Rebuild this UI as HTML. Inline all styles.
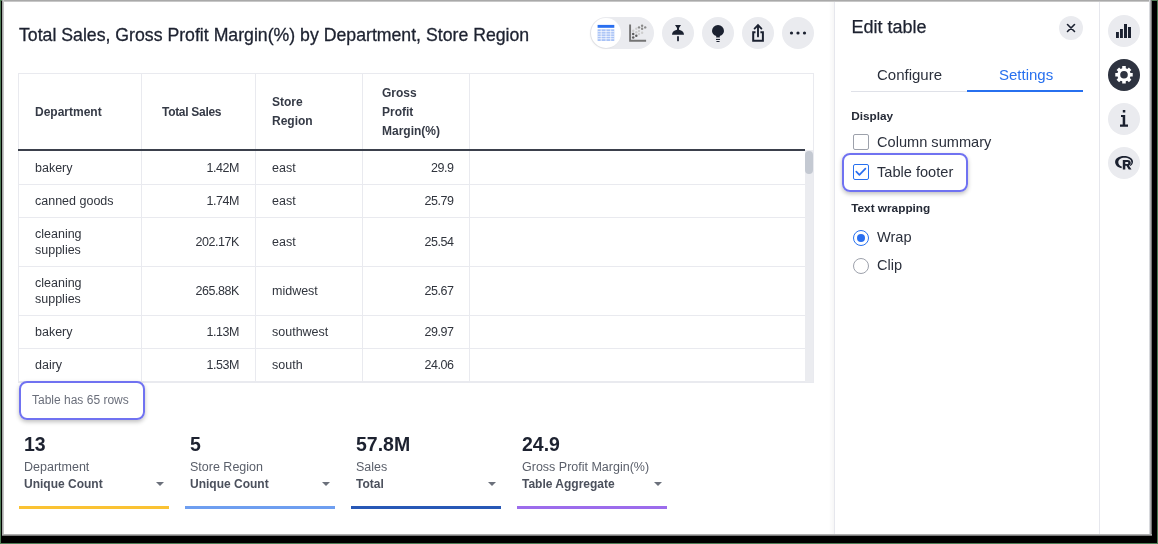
<!DOCTYPE html>
<html><head><meta charset="utf-8">
<style>
*{box-sizing:border-box;margin:0;padding:0}
html,body{width:1158px;height:544px;overflow:hidden;background:#4f7d56;font-family:"Liberation Sans",sans-serif}
.abs{position:absolute}
#shadow{position:absolute;left:1px;top:1px;width:1156px;height:542px;background:#000}
#win{position:absolute;left:2px;top:0;width:1150px;height:536px;background:#fff;overflow:hidden}
#win .edge-t{position:absolute;left:0;top:0;width:100%;height:2px;background:linear-gradient(#9a9a9a,#d6d6d6)}
#win .edge-l{position:absolute;left:0;top:0;width:2px;height:100%;background:linear-gradient(90deg,#9a9a9a,#d2d2d2)}
#win .edge-r{position:absolute;right:0;top:0;width:3px;height:100%;background:linear-gradient(90deg,#eef0f5,#a0a0a0 60%,#555)}
#win .edge-b{position:absolute;left:0;bottom:0;width:100%;height:2px;background:linear-gradient(#c8c8c8,#606060)}
/* everything inside win uses page coords: offset by -2px */
#page{will-change:transform;position:absolute;left:-2px;top:0;width:1158px;height:544px}
.title{-webkit-text-stroke:0.3px #1d2230;position:absolute;left:19px;top:25px;font-size:17.7px;color:#1d2230;white-space:nowrap;line-height:20px}
.btn{position:absolute;width:32px;height:32px;border-radius:50%;background:#eaebef}
.tbl{position:absolute;left:18px;top:73px;width:796px;height:310px;border:1px solid #e9eaef}
.vl{position:absolute;width:1px;background:#e9eaef}
.hl{position:absolute;height:1px;background:#e9eaef}
.th{position:absolute;font-size:12px;font-weight:bold;color:#353a46;line-height:19px}
.td{position:absolute;font-size:12.5px;color:#30343d;line-height:15.3px;white-space:nowrap}
.tdr{text-align:right}
.num{letter-spacing:-0.45px}
.hi{position:absolute;border:2px solid #7072f1;border-radius:8px;box-shadow:0 2px 4px rgba(0,0,0,.25)}
.foot{position:absolute;left:32px;top:392px;font-size:12px;color:#6b6f7b;line-height:16px;white-space:nowrap}
.card{position:absolute;top:430px;width:150px;height:80px}
.card .v{position:absolute;left:5px;top:3px;font-size:19.5px;font-weight:bold;color:#1d2230;line-height:22px;white-space:nowrap}
.card .l{position:absolute;left:5px;top:29px;font-size:12.5px;color:#5a5f6a;line-height:16px;white-space:nowrap}
.card .a{position:absolute;left:5px;top:46px;font-size:12px;font-weight:bold;color:#4b505c;line-height:16px;white-space:nowrap}
.card .c{position:absolute;left:137px;top:52px;width:0;height:0;border-left:4px solid transparent;border-right:4px solid transparent;border-top:4px solid #6b707b}
.card .u{position:absolute;left:0;top:76px;width:150px;height:3px}
.panel{position:absolute;left:834px;top:0;width:1px;height:536px;background:#e6e7ed}
.rail{position:absolute;left:1099px;top:0;width:1px;height:536px;background:#e6e7ed}
.ptitle{-webkit-text-stroke:0.25px #1d2230;position:absolute;left:851.5px;top:16.5px;font-size:18px;color:#1d2230;line-height:20px;white-space:nowrap}
.tab{position:absolute;top:66px;font-size:15px;line-height:18px;white-space:nowrap}
.sec{position:absolute;left:851.2px;font-size:11.8px;font-weight:bold;color:#252a36;line-height:16px;white-space:nowrap}
.opt{position:absolute;left:877px;font-size:14.6px;color:#2b303c;line-height:18px;white-space:nowrap}
.cb{position:absolute;left:853px;width:16px;height:16px;border:1px solid #9da1ab;border-radius:2px;background:#fff}
.rb{position:absolute;left:853px;width:16px;height:16px;border:1px solid #9da1ab;border-radius:50%;background:#fff}
</style></head><body>
<div id="shadow"></div>
<div id="win">
<div id="page">

<div class="title">Total Sales, Gross Profit Margin(%) by Department, Store Region</div>

<!-- toolbar -->
<div class="abs" style="left:590px;top:17px;width:64px;height:32px;border-radius:16px;background:#eaebef"></div>
<div class="abs" style="left:591px;top:18px;width:30px;height:30px;border-radius:50%;background:#fff;box-shadow:-1px 1px 2px rgba(0,0,0,.05)"></div>
<div class="btn" style="left:662px;top:17px"></div>
<div class="btn" style="left:702px;top:17px"></div>
<div class="btn" style="left:742px;top:17px"></div>
<div class="btn" style="left:782px;top:17px"></div>

<!-- table -->
<div class="abs" style="left:18px;top:73px;width:796px;height:310px;border:1px solid #e9eaef;border-bottom:2px solid #e9eaef"></div>
<div class="vl" style="left:141px;top:73px;height:308px"></div>
<div class="vl" style="left:255px;top:73px;height:308px"></div>
<div class="vl" style="left:362px;top:73px;height:308px"></div>
<div class="vl" style="left:469px;top:73px;height:308px"></div>
<div class="hl" style="left:18px;top:184px;width:787px"></div>
<div class="hl" style="left:18px;top:217px;width:787px"></div>
<div class="hl" style="left:18px;top:266px;width:787px"></div>
<div class="hl" style="left:18px;top:315px;width:787px"></div>
<div class="hl" style="left:18px;top:348px;width:787px"></div>
<div class="abs" style="left:18px;top:149px;width:787px;height:2px;background:#3b404c"></div>
<div class="abs" style="left:805px;top:150px;width:8px;height:232px;background:#ebecf0"></div>
<div class="abs" style="left:805px;top:151px;width:8px;height:23px;border-radius:4px;background:#c4c9d2"></div>
<div class="th" style="left:35px;top:103px">Department</div>
<div class="th" style="left:162px;top:103px;letter-spacing:-0.3px">Total Sales</div>
<div class="th" style="left:272px;top:93px">Store<br>Region</div>
<div class="th" style="left:382px;top:83.5px">Gross<br>Profit<br>Margin(%)</div>
<div class="td" style="left:35px;top:160.5px">bakery</div>
<div class="td tdr num" style="left:141px;width:98px;top:160.5px">1.42M</div>
<div class="td" style="left:272px;top:160.5px">east</div>
<div class="td tdr num" style="left:362px;width:91.5px;top:160.5px">29.9</div>
<div class="td" style="left:35px;top:193.5px">canned goods</div>
<div class="td tdr num" style="left:141px;width:98px;top:193.5px">1.74M</div>
<div class="td" style="left:272px;top:193.5px">east</div>
<div class="td tdr num" style="left:362px;width:91.5px;top:193.5px">25.79</div>
<div class="td" style="left:35px;top:225.75px;line-height:16px">cleaning<br>supplies</div>
<div class="td tdr num" style="left:141px;width:98px;top:234.5px">202.17K</div>
<div class="td" style="left:272px;top:234.5px">east</div>
<div class="td tdr num" style="left:362px;width:91.5px;top:234.5px">25.54</div>
<div class="td" style="left:35px;top:274.75px;line-height:16px">cleaning<br>supplies</div>
<div class="td tdr num" style="left:141px;width:98px;top:283.5px">265.88K</div>
<div class="td" style="left:272px;top:283.5px">midwest</div>
<div class="td tdr num" style="left:362px;width:91.5px;top:283.5px">25.67</div>
<div class="td" style="left:35px;top:324.5px">bakery</div>
<div class="td tdr num" style="left:141px;width:98px;top:324.5px">1.13M</div>
<div class="td" style="left:272px;top:324.5px">southwest</div>
<div class="td tdr num" style="left:362px;width:91.5px;top:324.5px">29.97</div>
<div class="td" style="left:35px;top:357.5px">dairy</div>
<div class="td tdr num" style="left:141px;width:98px;top:357.5px">1.53M</div>
<div class="td" style="left:272px;top:357.5px">south</div>
<div class="td tdr num" style="left:362px;width:91.5px;top:357.5px">24.06</div>


<div class="foot">Table has 65 rows</div>
<div class="hi" style="left:18.5px;top:381px;width:126.5px;height:39px"></div>

<!-- cards -->
<div class="card" style="left:19px"><div class="v">13</div><div class="l">Department</div><div class="a">Unique Count</div><div class="c"></div><div class="u" style="background:#fac233"></div></div>
<div class="card" style="left:185px"><div class="v">5</div><div class="l">Store Region</div><div class="a">Unique Count</div><div class="c"></div><div class="u" style="background:#6e9ef0"></div></div>
<div class="card" style="left:351px"><div class="v">57.8M</div><div class="l">Sales</div><div class="a">Total</div><div class="c"></div><div class="u" style="background:#2858b6"></div></div>
<div class="card" style="left:517px"><div class="v">24.9</div><div class="l">Gross Profit Margin(%)</div><div class="a">Table Aggregate</div><div class="c"></div><div class="u" style="background:#9c6cec"></div></div>

<!-- panel -->
<div class="abs" style="left:829px;top:0;width:5px;height:536px;background:linear-gradient(90deg,rgba(0,0,0,0),rgba(0,0,0,.035))"></div>
<div class="panel"></div>
<div class="ptitle">Edit table</div>
<div class="btn" style="left:1059px;top:16px;width:24px;height:24px"></div>
<div class="tab" style="left:877px;color:#2b303c">Configure</div>
<div class="tab" style="left:999px;color:#2770ef">Settings</div>
<div class="abs" style="left:851px;top:91px;width:116px;height:1px;background:#dfe1e8"></div>
<div class="abs" style="left:967px;top:90px;width:116px;height:2px;background:#2770ef"></div>
<div class="sec" style="top:108px">Display</div>
<div class="cb" style="top:134px"></div>
<div class="opt" style="top:133px">Column summary</div>
<div class="cb" style="top:164px;border-color:#2770ef"></div>
<div class="opt" style="top:163px">Table footer</div>
<div class="hi" style="left:841.5px;top:153px;width:126px;height:38.5px"></div>
<div class="sec" style="top:200px">Text wrapping</div>
<div class="rb" style="top:230px;border-color:#2770ef"></div>
<div class="opt" style="top:228.3px">Wrap</div>
<div class="rb" style="top:258px"></div>
<div class="opt" style="top:256.3px">Clip</div>

<!-- rail -->
<div class="rail"></div>
<div class="btn" style="left:1108px;top:15px"></div>
<div class="btn" style="left:1108px;top:59px;background:#2e3340"></div>
<div class="btn" style="left:1108px;top:103px"></div>
<div class="btn" style="left:1108px;top:147px"></div>

<svg class="abs" style="left:0;top:0" width="1158" height="544" viewBox="0 0 1158 544">
<!-- table icon -->
<rect x="597.6" y="24.9" width="16.7" height="2.9" fill="#2a6ff0"/>
<g fill="#a8c2f6">
<rect x="597.6" y="29.3" width="16.7" height="11.7"/>
</g>
<g stroke="#fff" stroke-width="0.7">
<line x1="601.2" y1="29.3" x2="601.2" y2="41"/>
<line x1="606" y1="29.3" x2="606" y2="41"/>
<line x1="610.7" y1="29.3" x2="610.7" y2="41"/>
<line x1="597.6" y1="31.6" x2="614.3" y2="31.6"/>
<line x1="597.6" y1="34" x2="614.3" y2="34"/>
<line x1="597.6" y1="36.4" x2="614.3" y2="36.4"/>
<line x1="597.6" y1="38.7" x2="614.3" y2="38.7"/>
</g>
<!-- scatter icon -->
<path d="M630.1,24.5 V40.8 H646.1" fill="none" stroke="#747474" stroke-width="1.9"/>
<g fill="#5e5e5e"><circle cx="633.2" cy="33.9" r="1.25"/><circle cx="633.2" cy="37.4" r="1.25"/><circle cx="636.3" cy="35.8" r="1.25"/></g>
<g fill="#8a8a8a"><circle cx="639" cy="27.4" r="1.2"/><circle cx="642.1" cy="25.7" r="1.2"/><circle cx="645.2" cy="27.4" r="1.2"/><circle cx="642.1" cy="28.8" r="1.2"/></g>
<g fill="#cdcdcd"><circle cx="633.2" cy="30.75" r="1.2"/><circle cx="636.3" cy="28.8" r="1.2"/><circle cx="639" cy="31" r="1.2"/><circle cx="636.3" cy="32.2" r="1.2"/><circle cx="639" cy="34.1" r="1.2"/><circle cx="642.1" cy="32.7" r="1.2"/></g>
<!-- pin -->
<path d="M675,25 H681 L679,28 V29.8 C682.2,30.3 684,32.5 684,34.8 H672 C672,32.5 673.8,30.3 677,29.8 V28 Z" fill="#1b2130"/>
<rect x="677.1" y="36" width="1.8" height="5.3" rx="0.9" fill="#1b2130"/>
<!-- bulb -->
<path d="M716.2,37.6 V36.1 C713.6,35.1 712,33.2 712,31 A6,6 0 1 1 724,31 C724,33.2 722.4,35.1 719.8,36.1 V37.6 Z" fill="#1b2130"/>
<rect x="716" y="38.9" width="4" height="1.1" fill="#1b2130"/>
<rect x="716.3" y="41" width="3.4" height="1.1" rx="0.55" fill="#1b2130"/>
<!-- share -->
<path d="M755.5,32.2 H753.2 V40.75 H762.9 V32.2 H760.4" fill="none" stroke="#1b2130" stroke-width="2"/>
<path d="M758,36.4 V25.6 M754.6,28.6 L758,25.2 L761.4,28.6" fill="none" stroke="#1b2130" stroke-width="1.9" stroke-linecap="round"/>
<!-- more -->
<g fill="#1b2130"><circle cx="791.5" cy="33" r="1.6"/><circle cx="798" cy="33" r="1.6"/><circle cx="804.5" cy="33" r="1.6"/></g>
<!-- close -->
<path d="M1067.5,24.5 L1074.5,31.5 M1074.5,24.5 L1067.5,31.5" stroke="#1b2130" stroke-width="1.6" stroke-linecap="round"/>
<!-- checkbox check -->
<path d="M856.3,171.7 L859.4,174.8 L865.4,168.7" fill="none" stroke="#2a6ff0" stroke-width="1.7" stroke-linecap="round" stroke-linejoin="round"/>
<!-- radio dot -->
<circle cx="861" cy="238" r="4" fill="#2a6ff0"/>
<!-- bars -->
<g fill="#1b2130"><rect x="1116" y="32" width="2.9" height="6"/><rect x="1120" y="29" width="2.9" height="9"/><rect x="1124" y="24" width="3" height="14"/><rect x="1128" y="27" width="3" height="11"/></g>
<!-- gear -->
<path fill="#fff" fill-rule="evenodd" d="M1122.21,68.34 L1122.23,66.08 L1125.77,66.08 L1125.79,68.34 L1127.30,68.97 L1128.91,67.38 L1131.42,69.89 L1129.83,71.50 L1130.46,73.01 L1132.72,73.03 L1132.72,76.57 L1130.46,76.59 L1129.83,78.10 L1131.42,79.71 L1128.91,82.22 L1127.30,80.63 L1125.79,81.26 L1125.77,83.52 L1122.23,83.52 L1122.21,81.26 L1120.70,80.63 L1119.09,82.22 L1116.58,79.71 L1118.17,78.10 L1117.54,76.59 L1115.28,76.57 L1115.28,73.03 L1117.54,73.01 L1118.17,71.50 L1116.58,69.89 L1119.09,67.38 L1120.70,68.97Z M1127.80,74.80 A3.8,3.8 0 1 0 1120.20,74.80 A3.8,3.8 0 1 0 1127.80,74.80Z"/>
<!-- info i -->
<g fill="#1b2130"><rect x="1122.8" y="110" width="2.5" height="2.5"/><path d="M1121,115 H1125.2 V124.5 H1128 V126.8 H1120 V124.5 H1122.7 V117.1 H1121 Z"/></g>
<!-- R logo -->
<path fill="#1b2130" fill-rule="evenodd" d="M1124,156.1 C1129.3,156.1 1133,158.6 1133,161.8 C1133,163.6 1132,165 1130.2,166 L1129.2,165.4 C1130.6,164.5 1131.3,163.3 1131.3,162.1 C1131.3,159.6 1128.3,157.8 1124.6,157.8 C1120.7,157.8 1118.3,159.8 1118.3,162.2 C1118.3,164.3 1119.8,165.9 1122,166.8 L1121.4,168.2 C1117.6,167.3 1115.1,165 1115.1,162 C1115.1,158.6 1118.9,156.1 1124,156.1 Z"/>
<path fill="#1b2130" stroke="#eaebef" stroke-width="1" paint-order="stroke" d="M1122.8,160 H1127.6 C1129.6,160 1130.8,161.2 1130.8,162.8 C1130.8,164.1 1130,165 1128.9,165.4 L1131.5,169.5 H1128.7 L1126.5,165.8 H1125.3 V169.5 H1122.8 Z M1125.3,161.9 V163.9 H1127.3 C1128,163.9 1128.3,163.5 1128.3,162.9 C1128.3,162.3 1128,161.9 1127.3,161.9 Z"/>
</svg>
</div>
<div class="edge-t"></div><div class="edge-l"></div><div class="edge-r"></div><div class="edge-b"></div>
</div>
</body></html>
